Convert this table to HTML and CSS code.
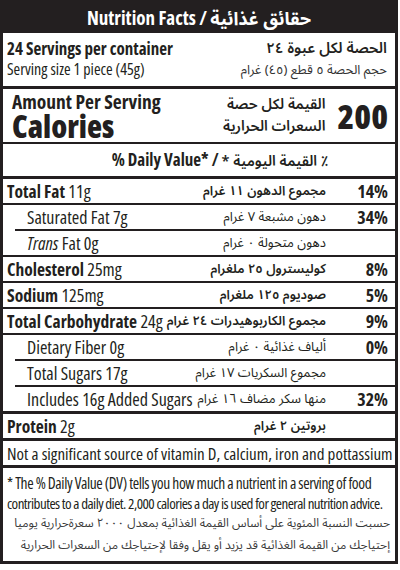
FILE: index.html
```html
<!DOCTYPE html>
<html lang="en">
<head>
<meta charset="utf-8">
<title>Nutrition Facts</title>
<link rel="stylesheet" href="styles.css">
</head>
<body>
<div class="label">
<div class="title">Nutrition Facts / <span class="ar">حقائق غذائية</span></div>

<div class="servings">
<div class="en">
<div class="b">24 Servings per container</div>
<div class="size">Serving size 1 piece (45g)</div>
</div>
<div class="ar" dir="rtl">
<div class="b">الحصة لكل عبوة ٢٤</div>
<div class="size">حجم الحصة ٥ قطع (٤٥) غرام</div>
</div>
</div>

<div class="cal">
<div class="en">
<div class="amount">Amount Per Serving</div>
<div class="calories">Calories</div>
</div>
<div class="ar" dir="rtl">
<div>القيمة لكل حصة</div>
<div>السعرات الحرارية</div>
</div>
<div class="kcal">200</div>
</div>

<div class="dv">% Daily Value* / <span class="ar" dir="rtl">٪ القيمة اليومية *</span></div>

<div class="row">
<div class="en"><b>Total Fat</b> 11g</div>
<div class="ar b" dir="rtl">مجموع الدهون ١١ غرام</div>
<div class="pct">14%</div>
</div>
<div class="row sub cut">
<div class="en">Saturated Fat 7g</div>
<div class="ar" dir="rtl">دهون مشبعة ٧ غرام</div>
<div class="pct">34%</div>
</div>
<div class="row sub">
<div class="en"><i>Trans</i> Fat 0g</div>
<div class="ar" dir="rtl">دهون متحولة ٠ غرام</div>
<div class="pct"></div>
</div>
<div class="row">
<div class="en"><b>Cholesterol</b> 25mg</div>
<div class="ar b" dir="rtl">كوليسترول ٢٥ ملغرام</div>
<div class="pct">8%</div>
</div>
<div class="row">
<div class="en"><b>Sodium</b> 125mg</div>
<div class="ar b" dir="rtl">صوديوم ١٢٥ ملغرام</div>
<div class="pct">5%</div>
</div>
<div class="row">
<div class="en"><b>Total Carbohydrate</b> 24g</div>
<div class="ar b" dir="rtl">مجموع الكاربوهيدرات ٢٤ غرام</div>
<div class="pct">9%</div>
</div>
<div class="row sub cut">
<div class="en">Dietary Fiber 0g</div>
<div class="ar" dir="rtl">ألياف غذائية ٠ غرام</div>
<div class="pct">0%</div>
</div>
<div class="row sub cut">
<div class="en">Total Sugars 17g</div>
<div class="ar" dir="rtl">مجموع السكريات ١٧ غرام</div>
<div class="pct"></div>
</div>
<div class="row sub thick">
<div class="en">Includes 16g Added Sugars</div>
<div class="ar" dir="rtl">منها سكر مضاف ١٦ غرام</div>
<div class="pct">32%</div>
</div>
<div class="row thick">
<div class="en"><b>Protein</b> 2g</div>
<div class="ar b" dir="rtl">بروتين ٢ غرام</div>
<div class="pct"></div>
</div>

<div class="vitamins">Not a significant source of vitamin D, calcium, iron and pottassium</div>

<div class="foot">
<div class="foot-en">* The % Daily Value (DV) tells you how much a nutrient in a serving of food</div>
<div class="foot-en tight">contributes to a daily diet. 2,000 calories a day is used for general nutrition advice.</div>
<div class="foot-ar" dir="rtl">حسبت النسبة المئوية على أساس القيمة الغذائية بمعدل ٢٠٠٠ سعرةحرارية يوميا</div>
<div class="foot-ar" dir="rtl">إحتياجك من القيمة الغذائية قد يزيد أو يقل وفقا لإحتياجك من السعرات الحرارية</div>
</div>
</div>
</body>
</html>
```
FILE: styles.css
```css
* {
margin: 0;
padding: 0;
box-sizing: border-box;
}

body {
background-color: #fff;
color: #231f20;
font-family: "Open Sans", "Noto Sans Arabic", sans-serif;
font-stretch: 75%;
}

.label {
width: 398px;
border: 3px solid #231f20;
}

.ar {
font-family: "Noto Sans Arabic", sans-serif;
font-stretch: 100%;
}

.b {
font-weight: 600;
}

.title {
height: 30px;
background-color: #231f20;
color: #fff;
font-size: 19px;
font-weight: bold;
line-height: 30px;
text-align: center;
}

.title .ar {
font-size: 18px;
}

.servings {
display: flex;
justify-content: space-between;
align-items: center;
height: 56px;
padding: 0 8px 2px 4px;
border-bottom: 3px solid #231f20;
}

.servings .en .b {
font-size: 17px;
font-weight: bold;
line-height: 21px;
}

.servings .en .size {
font-size: 16px;
font-stretch: 82%;
line-height: 21px;
}

.servings .ar {
text-align: right;
font-size: 15px;
line-height: 22px;
}

.servings .ar .size {
font-size: 13px;
color: #333;
}

.cal {
display: flex;
align-items: center;
height: 55px;
padding: 0 7px 0 9px;
border-bottom: 2px solid #231f20;
}

.cal .en {
flex: 1;
}

.amount {
font-size: 19.5px;
font-weight: bold;
line-height: 21px;
}

.calories {
font-size: 31px;
font-weight: 800;
line-height: 29px;
}

.cal .ar {
font-size: 14.5px;
font-weight: 600;
line-height: 22px;
text-align: right;
margin-right: 12px;
}

.kcal {
font-size: 34px;
font-weight: 800;
}

.dv {
height: 35px;
padding-left: 42px;
border-bottom: 3px solid #231f20;
font-size: 17px;
font-weight: bold;
line-height: 32px;
text-align: center;
}

.dv .ar {
font-size: 14.5px;
font-weight: 600;
}

.row {
display: flex;
align-items: center;
height: 26px;
padding: 0 7px 0 4px;
border-bottom: 2px solid #231f20;
font-size: 18px;
}

.row b {
font-size: 17.5px;
font-weight: bold;
}

.row.sub {
padding-left: 24px;
}

.row.cut {
margin-left: 12px;
padding-left: 12px;
}

.row.thick {
height: 27px;
border-bottom-width: 3px;
}

.row .en {
flex: 1;
min-width: 0;
white-space: nowrap;
}

.row .ar {
flex: none;
font-size: 13px;
text-align: right;
white-space: nowrap;
}

.row .pct {
flex: none;
width: 62px;
font-weight: bold;
text-align: right;
}

.vitamins {
height: 27px;
padding-left: 4px;
border-bottom: 3px solid #231f20;
font-size: 17px;
line-height: 25px;
white-space: nowrap;
}

.foot {
height: 93px;
padding: 5px 5px 0 4px;
}

.foot-en {
font-size: 15.5px;
letter-spacing: -0.4px;
line-height: 20px;
white-space: nowrap;
}

.foot-en.tight {
font-size: 15px;
letter-spacing: -0.55px;
}

.foot-ar {
font-family: "Noto Sans Arabic", sans-serif;
font-stretch: 100%;
font-size: 12px;
line-height: 22px;
color: #3a3a3a;
white-space: nowrap;
}
```
